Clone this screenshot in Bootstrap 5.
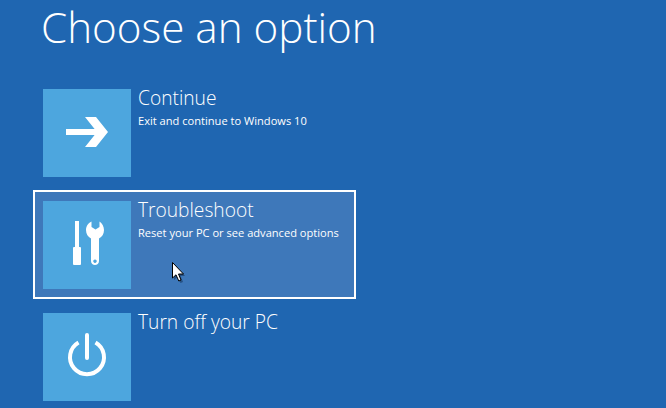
<!DOCTYPE html>
<html lang="en">
<head>
  <meta charset="UTF-8">
  <title>Choose an option</title>
  <link href="https://cdn.jsdelivr.net/npm/bootstrap@5.3.0/dist/css/bootstrap.min.css" rel="stylesheet">
  <style>
    body {
      background-color: #1f66b1;
      color: #fff;
      font-family: "Open Sans", "Liberation Sans", sans-serif;
      overflow: hidden;
    }
    .page-wrap {
      width: 666px;
      height: 408px;
      padding-left: 33px;
      position: relative;
      overflow: hidden;
    }
    .page-title {
      height: 78px;
      margin: 0 0 0 8px;
      font-size: 42.2px;
      font-weight: 300;
      line-height: 54px;
    }
    .option-item {
      width: 323px;
      height: 108px;
      padding: 9px 8px;
      border: 2px solid transparent;
      margin-bottom: 4px;
      gap: 7px;
    }
    .option-item.selected {
      height: 109px;
      margin-bottom: 3px;
      border-color: #fff;
      background-color: #3e78ba;
    }
    .option-tile {
      width: 88px;
      height: 88px;
      flex: none;
      background-color: #4da6de;
    }
    .option-name {
      font-size: 19.2px;
      font-weight: 300;
      line-height: 22px;
      margin-top: -2px;
    }
    .option-desc {
      font-size: 11.1px;
      line-height: 14px;
      margin-top: 5px;
    }
    .mouse-cursor {
      position: absolute;
      left: 171px;
      top: 261px;
    }
  </style>
</head>
<body>
  <div class="page-wrap">
    <h1 class="page-title">Choose an option</h1>

    <div class="option-item d-flex">
      <div class="option-tile">
        <svg class="d-block" width="88" height="88" viewBox="0 0 88 88">
          <path d="M23 40H56V46H23Z M42 28H53L65 43L53 58H42L54 43Z" fill="#fff"/>
        </svg>
      </div>
      <div>
        <div class="option-name">Continue</div>
        <div class="option-desc">Exit and continue to Windows 10</div>
      </div>
    </div>

    <div class="option-item selected d-flex">
      <div class="option-tile">
        <svg class="d-block" width="88" height="88" viewBox="0 0 88 88">
          <path d="M32 20H36V46H32Z" fill="#fff"/>
          <rect x="30" y="46" width="8" height="18" rx="1" fill="#fff"/>
          <path fill-rule="evenodd" fill="#fff" d="M48.500 20.500C45 22 43 25.500 43 29C43 33 45 36 48 37.500V60C48 62.500 50 64 52 64C54 64 56 62.500 56 60V37.500C59 36 61 33 61 29C61 25.500 59 22 56.500 20.500V26L52.500 28.500L48.500 26ZM52 58.500A1.700 1.700 0 1 1 51.990 58.500Z"/>
        </svg>
      </div>
      <div>
        <div class="option-name">Troubleshoot</div>
        <div class="option-desc">Reset your PC or see advanced options</div>
      </div>
    </div>

    <div class="option-item d-flex">
      <div class="option-tile">
        <svg class="d-block" width="88" height="88" viewBox="0 0 88 88">
          <path d="M35.500 29.500A17 17 0 1 0 52.500 29.500" fill="none" stroke="#fff" stroke-width="4"/>
          <path d="M44 22V45" fill="none" stroke="#fff" stroke-width="4" stroke-linecap="round"/>
        </svg>
      </div>
      <div>
        <div class="option-name">Turn off your PC</div>
      </div>
    </div>

    <svg class="mouse-cursor" width="15" height="23" viewBox="0 0 15 23">
      <path d="M3 3V19L6.500 16L9.500 22L12 21L9.500 15H14Z" fill="#0b2a4e" opacity="0.5"/>
      <path d="M1.500 1.500V17L5 13.800L7.800 20L10 19L7.500 13H12.500Z" fill="#fff" stroke="#000" stroke-width="1"/>
    </svg>
  </div>

  <script src="https://cdn.jsdelivr.net/npm/bootstrap@5.3.0/dist/js/bootstrap.bundle.min.js"></script>
</body>
</html>
